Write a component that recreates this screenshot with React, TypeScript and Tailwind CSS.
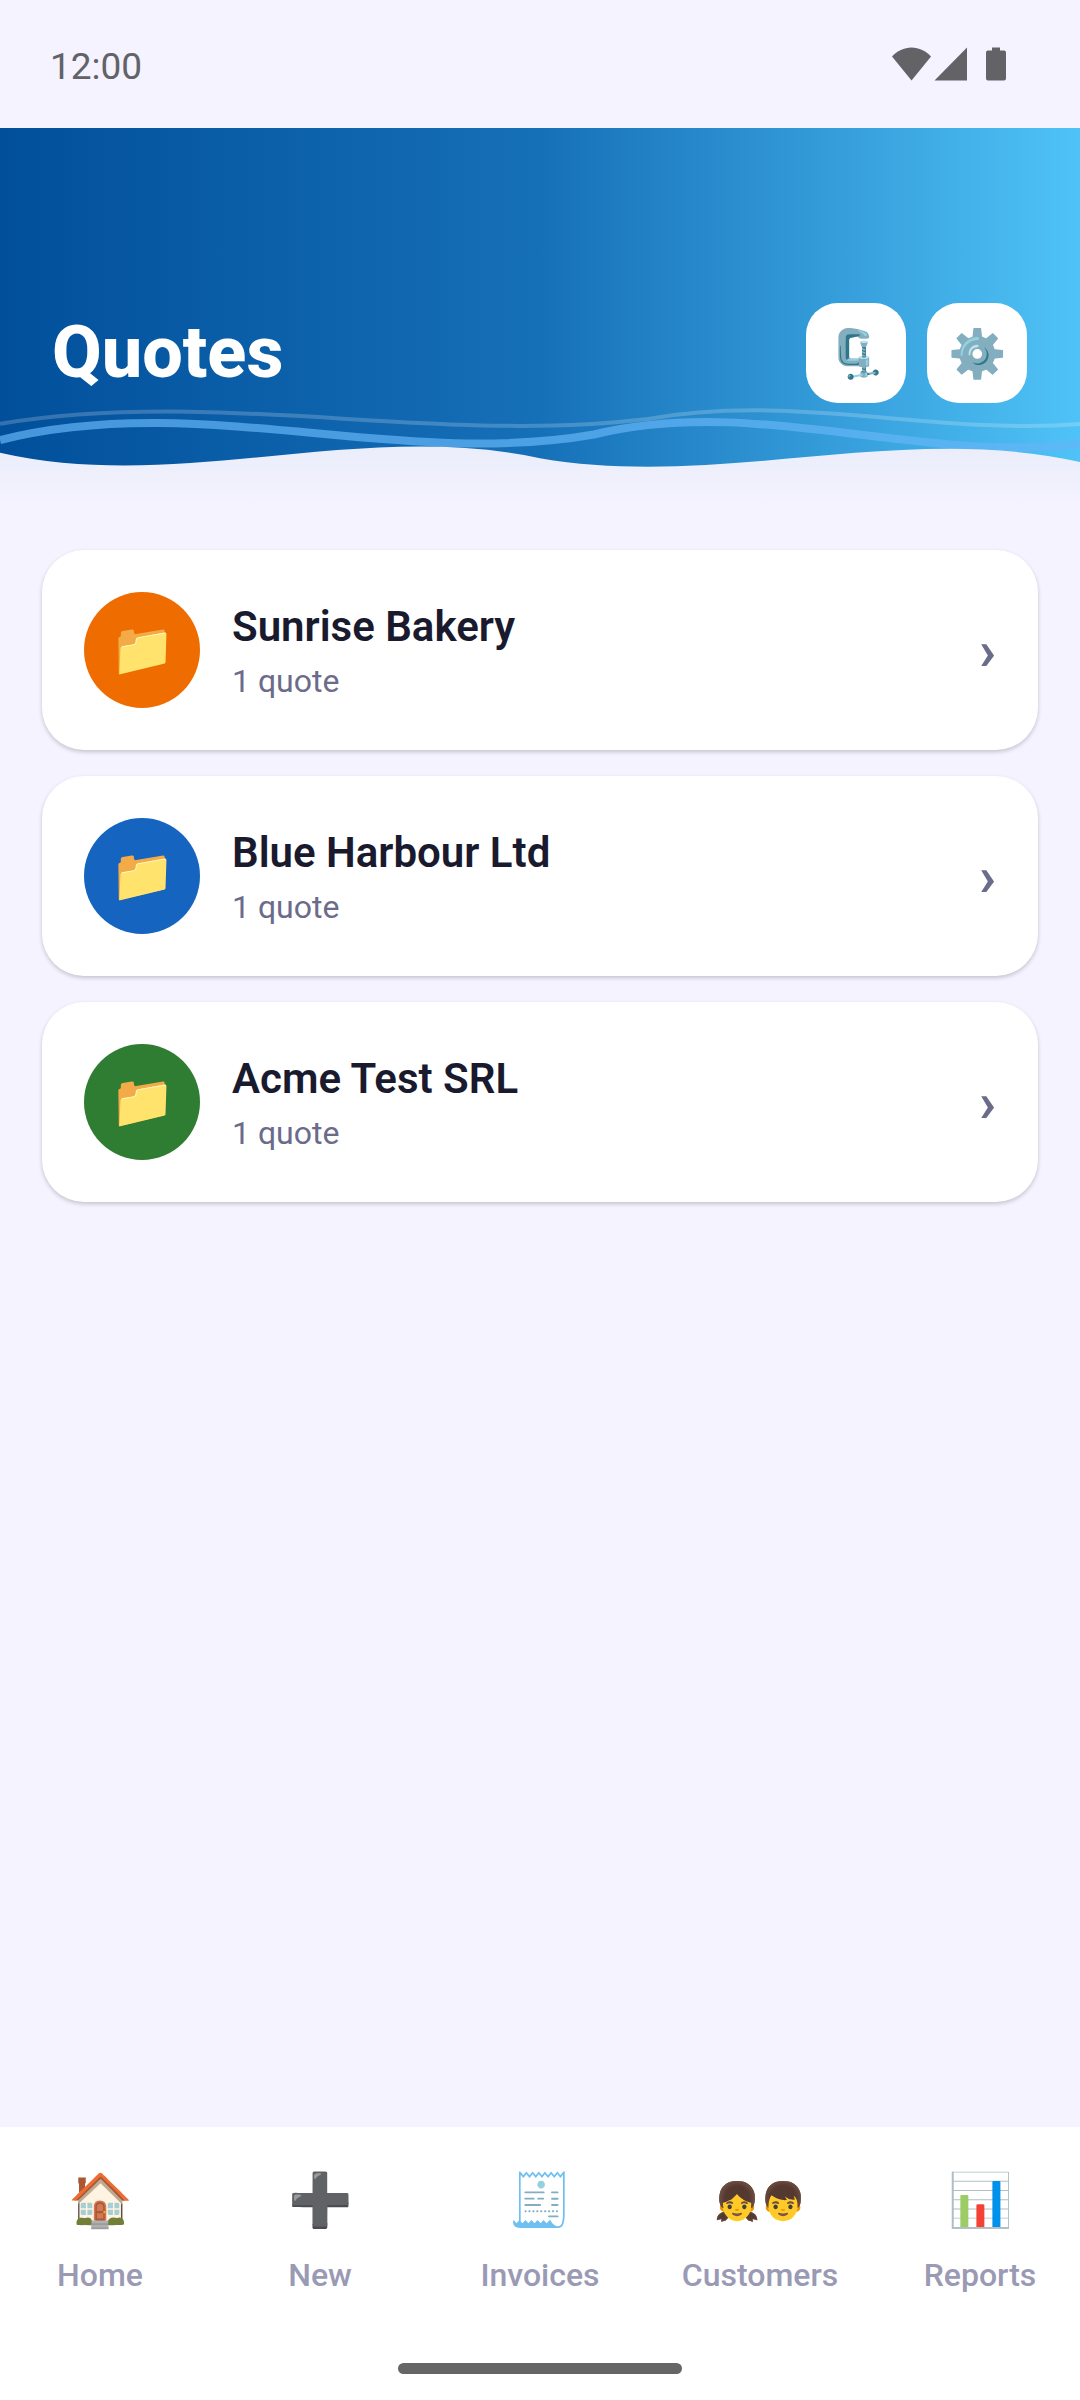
import React from 'react';

const customers = [
  { name: 'Sunrise Bakery', count: '1 quote', color: 'bg-[#ef6c00]' },
  { name: 'Blue Harbour Ltd', count: '1 quote', color: 'bg-[#1565c0]' },
  { name: 'Acme Test SRL', count: '1 quote', color: 'bg-[#2e7d32]' },
];

const tabs = [
  { label: 'Home', icon: '🏠', size: 'text-[52px]' },
  { label: 'New', icon: '➕', size: 'text-[52px]' },
  { label: 'Invoices', icon: '🧾', size: 'text-[52px]' },
  { label: 'Customers', icon: '👧👦', size: 'text-[37px]' },
  { label: 'Reports', icon: '📊', size: 'text-[52px]' },
];

function StatusBar() {
  return (
    <div className="flex h-32 items-center justify-between pl-[50px] pr-[73px] text-[#636266]">
      <span className="pt-1 text-[37px] leading-none">12:00</span>
      <svg width="115" height="34" viewBox="0 0 115 34" fill="currentColor" className="block" aria-hidden="true">
        <path d="M0 9.5C5 4 12 .5 19.500 .5S34 4 39 9.500L19.500 33.500Z" />
        <path d="M75 .5V33.500H42.500Z" />
        <path d="M100 .5h8v3h4a2 2 0 0 1 2 2v26a2 2 0 0 1-2 2h-16a2 2 0 0 1-2-2v-26a2 2 0 0 1 2-2h4z" />
      </svg>
    </div>
  );
}

function Waves() {
  return (
    <svg
      viewBox="0 0 1080 112"
      preserveAspectRatio="none"
      className="absolute inset-x-0 bottom-0 h-28 w-full"
      aria-hidden="true"
    >
      <defs>
        <linearGradient id="fade" x1="0" y1="46" x2="0" y2="108" gradientUnits="userSpaceOnUse">
          <stop offset="0" stopColor="#eaedfa" />
          <stop offset="1" stopColor="#f5f3ff" />
        </linearGradient>
      </defs>
      <path
        d="M0 23.700C216 -12.200 432 44.700 648 19C792 -7.300 936 35.500 1080 24"
        fill="none" stroke="#fff" strokeOpacity="0.2" strokeWidth="4"
      />
      <path
        d="M0 40C198 -9.800 396 69 594 34.500C756 -5 918 63.700 1080 44"
        fill="none" stroke="#64b5f6" strokeOpacity="0.7" strokeWidth="8"
      />
      <path
        d="M0 52.700C180 93.600 360 19.400 540 58.300C720 89.400 900 21.700 1080 62V112H0Z"
        fill="url(#fade)"
      />
    </svg>
  );
}

function Header() {
  return (
    <header className="relative h-96 bg-[linear-gradient(90deg,#014f9b_0%,#1670b8_50%,#4fc3f7_100%)] pl-[52px] pr-[53px] pt-[175px]">
      <Waves />
      <div className="relative flex items-center justify-between">
        <h1 className="text-[72px] font-extrabold leading-none text-white">Quotes</h1>
        <div className="flex gap-[21px]">
          <button aria-label="Archive" className="flex size-[100px] items-center justify-center rounded-[32px] bg-white text-[47px] leading-none">
            🗜️
          </button>
          <button aria-label="Settings" className="flex size-[100px] items-center justify-center rounded-[32px] bg-white text-[47px] leading-none">
            ⚙️
          </button>
        </div>
      </div>
    </header>
  );
}

export default function App() {
  return (
    <div className="flex min-h-screen flex-col overflow-x-hidden bg-[#f5f3ff] font-['Roboto',sans-serif]">
      <StatusBar />
      <Header />

      <main className="flex flex-1 flex-col gap-[26px] px-[42px] pt-[38px]">
        {customers.map((c) => (
          <button
            key={c.name}
            className="flex h-[200px] items-center gap-8 rounded-[42px] bg-white px-[42px] text-left shadow-[0_2px_4px_rgba(0,0,0,0.2)]"
          >
            <span className={`flex size-[116px] items-center justify-center rounded-full text-[52px] leading-none ${c.color}`}>
              📁
            </span>
            <span className="flex flex-1 flex-col gap-1 pt-1.5">
              <span className="text-[42px] font-semibold leading-[52px] text-[#1a1a2e]">{c.name}</span>
              <span className="text-[32px] leading-[48px] text-[#6b6b8a]">{c.count}</span>
            </span>
            <span className="text-[56px] font-bold leading-none text-[#6b6b8a]">›</span>
          </button>
        ))}
      </main>

      <nav className="bg-white pt-[42px]">
        <div className="-mx-[10px] grid grid-cols-5">
          {tabs.map((tab) => (
            <a key={tab.label} href="#" className="flex flex-col items-center gap-5">
              <span className={`flex h-16 items-center leading-none ${tab.size}`}>{tab.icon}</span>
              <span className="text-[32px] font-medium leading-[44px] text-[#9a9ab5]">{tab.label}</span>
            </a>
          ))}
        </div>
        <div className="mx-auto mb-[26px] mt-[66px] h-[11px] w-[284px] rounded-full bg-[#666]" />
      </nav>
    </div>
  );
}
